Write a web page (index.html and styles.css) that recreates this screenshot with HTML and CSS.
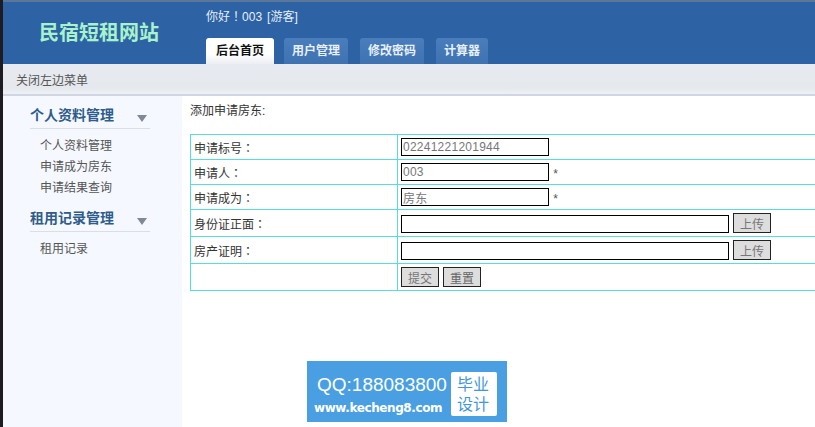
FILE: index.html
```html
<!DOCTYPE html>
<html lang="zh">
<head>
<meta charset="utf-8">
<title>民宿短租网站</title>
<link rel="stylesheet" href="styles.css">
</head>
<body>
<div class="app">
  <header class="header">
    <div class="logo">民宿短租网站</div>
    <div class="head-main">
      <div class="greet">你好<span class="pc" lang="zh-TW">！</span>003<span class="role">[游客]</span></div>
      <nav class="tabs">
        <a class="tab active">后台首页</a>
        <a class="tab">用户管理</a>
        <a class="tab">修改密码</a>
        <a class="tab">计算器</a>
      </nav>
    </div>
  </header>
  <div class="subbar">关闭左边菜单</div>
  <div class="body">
    <aside class="side">
      <div class="group-title"><span>个人资料管理</span><i class="arrow"></i></div>
      <ul class="menu">
        <li>个人资料管理</li>
        <li>申请成为房东</li>
        <li>申请结果查询</li>
      </ul>
      <div class="group-title"><span>租用记录管理</span><i class="arrow"></i></div>
      <ul class="menu">
        <li>租用记录</li>
      </ul>
    </aside>
    <main class="main">
      <p class="form-title">添加申请房东:</p>
      <table class="form-table">
        <tr class="r25"><td class="lab">申请标号<span class="pc" lang="zh-TW">：</span></td><td class="val"><input class="ipt short" value="02241221201944"></td></tr>
        <tr class="r25"><td class="lab">申请人<span class="pc" lang="zh-TW">：</span></td><td class="val"><input class="ipt short" value="003"> <span class="star">*</span></td></tr>
        <tr class="r25"><td class="lab">申请成为<span class="pc" lang="zh-TW">：</span></td><td class="val"><input class="ipt short" value="房东"> <span class="star">*</span></td></tr>
        <tr class="r27"><td class="lab">身份证正面<span class="pc" lang="zh-TW">：</span></td><td class="val"><input class="ipt long"><button class="btn up">上传</button></td></tr>
        <tr class="r27"><td class="lab">房产证明<span class="pc" lang="zh-TW">：</span></td><td class="val"><input class="ipt long"><button class="btn up">上传</button></td></tr>
        <tr class="r27"><td class="lab"></td><td class="val"><button class="btn">提交</button><button class="btn next">重置</button></td></tr>
      </table>
    </main>
  </div>
  <div class="badge">
    <div class="badge-text">
      <div class="qq">QQ:188083800</div>
      <div class="web">www.kecheng8.com</div>
    </div>
    <div class="badge-box">毕业<br>设计</div>
  </div>
</div>
</body>
</html>
```
FILE: styles.css
```css
* { box-sizing: border-box; }
html, body { margin: 0; padding: 0; height: 100%; overflow: hidden; background: #fff; }
body { font-family: "Liberation Sans", "Noto Sans CJK SC", sans-serif; font-size: 12px; color: #333; }
.app { position: relative; width: 815px; height: 427px; overflow: hidden; border-left: 3px solid #1c1c22; }
.pc { font-family: "Noto Sans CJK TC", sans-serif; line-height: 1; }

.header { display: flex; height: 64px; background: #2d62a4; border-top: 2px solid #5a7698; }
.logo { width: 183px; padding: 17px 0 0 36px; font-size: 20px; font-weight: bold; color: #a8f2cc; line-height: 28px; }
.head-main { display: flex; flex-direction: column; padding-left: 20px; }
.greet { color: #e6eef8; height: 36px; padding-top: 7px; line-height: 16px; font-size: 12px; }
.role { margin-left: 5px; }
.tabs { display: flex; gap: 12px; }
.tab { display: block; height: 26px; padding: 0 8px; line-height: 27px; border-radius: 3px 3px 0 0; background: linear-gradient(#4a7dbb, #3f72b0); color: #e8f0fa; font-size: 12px; font-weight: bold; }
.tab.active { margin-right: -2px; padding: 0 10px; background: linear-gradient(#fff 60%, #eceef2); color: #111; }

.subbar { height: 32px; padding: 1px 0 0 13px; line-height: 32px; background: linear-gradient(#e7eaf0, #e5e8ed 80%, #eef0f4); border-bottom: 2px solid #cdd6e2; color: #555; }

.body { display: flex; height: 331px; }
.side { width: 179px; padding: 9px 32px 0 27px; background: #f5f9ff; }
.group-title { display: flex; justify-content: space-between; align-items: center; height: 24px; padding-bottom: 5px; border-bottom: 1px solid #d9dfe7; font-size: 14px; font-weight: bold; color: #2f5c8a; }
.arrow { width: 0; height: 0; margin: 9px 3px 0 0; border-style: solid; border-width: 7px 5px 0; border-color: #7f8a96 transparent transparent; }
.menu { list-style: none; margin: 0 0 9px; padding: 7px 0 0 10px; color: #555; }
.menu li { height: 21px; line-height: 21px; }

.main { flex: 1; padding-left: 8px; min-width: 0; }
.form-title { margin: 0; height: 38px; padding-top: 7px; line-height: 16px; color: #333; }
.form-table { width: 700px; border-collapse: collapse; table-layout: fixed; }
.form-table td { padding: 0; border: 1px solid #55dde0; }
.form-table .lab { width: 207px; padding: 4px 0 0 3px; line-height: 16px; color: #333; }
.form-table .val { padding-left: 3px; }
.r25 { height: 25px; }
.r27 { height: 27px; }
.ipt { display: inline-block; vertical-align: bottom; height: 18px; padding: 0 0 0 1px; border: 1px solid #000; background: #fff; font: 12px "Liberation Sans", "Noto Sans CJK SC", sans-serif; color: #777; letter-spacing: .25px; }
.short { width: 148px; }
.long { width: 328px; }
.star { margin-left: 1px; color: #555; }
.btn { display: inline-block; vertical-align: bottom; width: 38px; height: 20px; padding: 0; border: 1px solid #222; background: #ddd; color: #777; font: 12px "Liberation Sans", "Noto Sans CJK SC", sans-serif; }
.btn.up { margin-left: 4px; }
.btn.next { margin-left: 4px; color: #666; }

.badge { position: absolute; left: 304px; top: 361px; display: flex; align-items: center; width: 200px; height: 61px; padding-left: 7px; background: #4a9fe2; color: #fff; }
.badge-text { width: 137px; margin-top: 6px; }
.qq { font-size: 19px; line-height: 24px; padding-left: 3px; white-space: nowrap; }
.web { font-size: 12px; font-weight: bold; line-height: 16px; font-family: "DejaVu Sans", sans-serif; white-space: nowrap; letter-spacing: -.4px; margin-top: 3px; }
.badge-box { width: 46px; height: 44px; margin-top: 5px; padding: 3px 2px 0 0; background: #fff; border-radius: 2px; color: #3f97dd; font-size: 16px; line-height: 20px; text-align: center; }
```
